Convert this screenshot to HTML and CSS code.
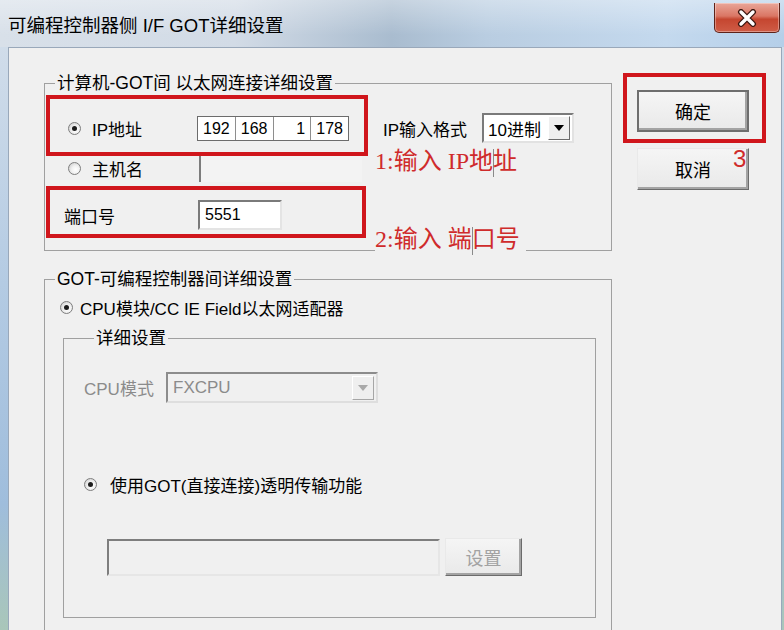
FILE: index.html
```html
<!DOCTYPE html>
<html lang="zh-CN">
<head>
    <meta charset="UTF-8">
    <title>可编程控制器侧 I/F GOT详细设置</title>
    <link rel="stylesheet" href="styles.css">
</head>
<body>
    <div class="window">
        <div class="titlebar">
            <span class="title">可编程控制器侧 I/F GOT详细设置</span>
            <div class="close">
                <svg width="22" height="18" viewBox="0 0 22 18">
                    <path d="M5 3 L17 15 M17 3 L5 15" stroke="#3b1610" stroke-width="6" stroke-linecap="round"/>
                    <path d="M5 3 L17 15 M17 3 L5 15" stroke="#fff" stroke-width="3.4" stroke-linecap="round"/>
                </svg>
            </div>
        </div>

        <div class="client">
            <div class="main">
                <!-- 计算机和GOT之间 -->
                <fieldset class="group group-eth">
                    <legend>计算机-GOT间 以太网连接详细设置</legend>
                    <div class="row row-opt">
                        <span class="radio on"></span>
                        <span class="row-label">IP地址</span>
                        <div class="ip-field">
                            <span>192</span><span>168</span><span>1</span><span>178</span>
                        </div>
                        <span class="fmt-label">IP输入格式</span>
                        <div class="combo combo-fmt">
                            <span class="combo-text">10进制</span>
                            <span class="combo-btn"></span>
                        </div>
                    </div>
                    <div class="row row-opt row-host">
                        <span class="radio"></span>
                        <span class="row-label">主机名</span>
                        <div class="host-field"></div>
                    </div>
                    <div class="row row-port">
                        <span class="port-label">端口号</span>
                        <div class="port-input">5551</div>
                    </div>
                </fieldset>

                <!-- GOT和PLC之间 -->
                <fieldset class="group group-plc">
                    <legend>GOT-可编程控制器间详细设置</legend>
                    <div class="row row-cpu">
                        <span class="radio on"></span>
                        <span>CPU模块/CC IE Field以太网适配器</span>
                    </div>
                    <fieldset class="group group-detail">
                        <legend>详细设置</legend>
                        <div class="row row-mode">
                            <span class="mode-label">CPU模式</span>
                            <div class="combo combo-off">
                                <span class="combo-text">FXCPU</span>
                                <span class="combo-btn"></span>
                            </div>
                        </div>
                        <div class="row row-trans">
                            <span class="radio on"></span>
                            <span>使用GOT(直接连接)透明传输功能</span>
                        </div>
                        <div class="row row-path">
                            <div class="path-field"></div>
                            <button class="btn btn-off">设置</button>
                        </div>
                    </fieldset>
                </fieldset>
            </div>

            <div class="side">
                <button class="btn btn-default">确定</button>
                <button class="btn">取消</button>
            </div>
        </div>

        <!-- 标注 -->
        <div class="mark mark-ip"></div>
        <div class="mark mark-port"></div>
        <div class="mark mark-ok"></div>
        <span class="note note-ip">1:输入 IP地<i class="caret"></i>址</span>
        <span class="note note-port">2:输入 端<i class="caret"></i>口号</span>
        <span class="note note-ok">3</span>
    </div>
</body>
</html>
```

FILE: styles.css
```css
body {
    margin: 0;
    font-family: "Liberation Sans", "Noto Sans CJK SC", sans-serif;
    font-size: 17px;
    color: #000;
}

.window {
    position: relative;
    width: 784px;
    height: 630px;
    overflow: hidden;
    background: linear-gradient(180deg, #d6e0eb 0%, #b4cbe3 45%, #9fbddc 80%, #a9c6b9 100%);
}

.titlebar {
    height: 47px;
    display: flex;
    justify-content: space-between;
    align-items: flex-start;
    background:
        linear-gradient(180deg, rgba(255, 255, 255, 0.35), rgba(255, 255, 255, 0) 75%),
        linear-gradient(90deg, #d8e0e9 0%, #d2dbe6 30%, #a9bccf 50%, #b9cde1 62%, #c4d9ee 85%, #b5cfe9 100%);
}

.title {
    margin: 16px 0 0 8px;
    font-size: 18.5px;
    line-height: 20px;
}

.close {
    width: 66px;
    height: 30px;
    margin: 3px 4px 0 0;
    box-sizing: border-box;
    display: flex;
    align-items: center;
    justify-content: center;
    border: 1px solid #5e2219;
    border-top: none;
    border-radius: 0 0 5px 5px;
    background: linear-gradient(180deg, #e9a699 0%, #da7664 45%, #c54630 56%, #cf5c46 100%);
    box-shadow: inset 0 0 0 1px rgba(255, 255, 255, 0.35);
}

.client {
    display: flex;
    gap: 25px;
    width: 774px;
    height: 583px;
    margin-left: 8px;
    box-sizing: border-box;
    padding: 25px 0 0 35px;
    background: #f0f0f0;
    border: 1px solid #99a8ba;
    border-bottom: none;
}

.main {
    width: 568px;
    flex: none;
}

/* group box */
.group {
    margin: 0;
    padding: 0;
    min-width: 0;
    border: 1px solid #a0a0a0;
}

.group legend {
    margin-left: 10px;
    padding: 0 2px;
    font-size: 17.5px;
    line-height: 20px;
}

.group-eth {
    padding: 19px 0;
}

.row {
    display: flex;
    align-items: center;
    height: 32px;
}

.row-opt {
    padding-left: 23px;
}

.row-host {
    margin-top: 8px;
}

.row-port {
    margin-top: 15px;
    padding-left: 19px;
}

.radio {
    position: relative;
    flex: none;
    width: 13px;
    height: 13px;
    margin-right: 11px;
    box-sizing: border-box;
    border: 1px solid #7e7e7e;
    border-radius: 50%;
    background: radial-gradient(circle at 60% 60%, #ffffff 0, #f2f2f2 40%, #c4c4c4 100%);
}

.radio.on::after {
    content: "";
    position: absolute;
    left: 3px;
    top: 3px;
    width: 5px;
    height: 5px;
    border-radius: 50%;
    background: #1c1c1c;
}

.row-label {
    width: 105px;
}

.ip-field {
    display: flex;
    width: 152px;
    height: 25px;
    box-sizing: border-box;
    border: 1px solid #6c6c6c;
    background: #fff;
}

.ip-field span {
    flex: 1;
    border-left: 1px solid #8e8e8e;
    padding-right: 5px;
    text-align: right;
    font-size: 16px;
    line-height: 23px;
}

.ip-field span:first-child {
    border-left: none;
}

.fmt-label {
    width: 99px;
    margin-left: 34px;
}

.combo {
    display: flex;
    align-items: center;
    box-sizing: border-box;
    border: 2px solid;
    border-color: #7a7a7a #e2e2e2 #e2e2e2 #7a7a7a;
    background: #fff;
}

.combo-fmt {
    width: 92px;
    height: 30px;
}

.combo-text {
    padding-left: 4px;
}

.combo-btn {
    display: flex;
    align-items: center;
    justify-content: center;
    width: 22px;
    height: 24px;
    margin-left: auto;
    margin-right: 2px;
    box-sizing: border-box;
    border: 1px solid;
    border-color: #fff #6b6b6b #6b6b6b #fff;
    background: #efefef;
}

.combo-btn::after {
    content: "";
    border-left: 5px solid transparent;
    border-right: 5px solid transparent;
    border-top: 6px solid #000;
}

.host-field {
    width: 161px;
    height: 28px;
    margin-left: 2px;
    border-left: 2px solid #7c7c7c;
    background: #f3f3f3;
}

.port-label {
    width: 134px;
}

.port-input {
    width: 84px;
    height: 30px;
    box-sizing: border-box;
    padding-left: 5px;
    border: 2px solid;
    border-color: #7a7a7a #e4e4e4 #e4e4e4 #7a7a7a;
    background: #fff;
    font-size: 16px;
    line-height: 26px;
}

.group-plc {
    margin-top: 18px;
    padding: 6px 0 20px 0;
}

.row-cpu {
    height: 24px;
    padding-left: 15px;
}

.row-cpu .radio {
    margin-right: 7px;
}

.group-detail {
    width: 533px;
    margin: 9px 0 0 18px;
    box-sizing: border-box;
    padding: 24px 0 41px 20px;
}

.row-mode {
    height: 31px;
}

.mode-label {
    width: 82px;
    color: #8b8b8b;
}

.combo-off {
    width: 212px;
    height: 31px;
    border-color: #8c8c8c #dedede #dedede #8c8c8c;
    background: #f0f0f0;
    color: #8b8b8b;
}

.combo-off .combo-text {
    padding-left: 5px;
}

.combo-off .combo-btn {
    border-color: #fff #a6a6a6 #a6a6a6 #fff;
}

.combo-off .combo-btn::after {
    border-top-color: #a9a9a9;
}

.row-trans {
    height: 24px;
    margin-top: 69px;
}

.row-trans .radio {
    margin-right: 13px;
}

.row-path {
    height: 38px;
    margin-top: 42px;
    margin-left: 23px;
    gap: 5px;
}

.path-field {
    width: 333px;
    height: 37px;
    box-sizing: border-box;
    border: 2px solid;
    border-color: #7e7e7e #e6e6e6 #e6e6e6 #7e7e7e;
    background: #f0f0f0;
}

/* buttons */
.side {
    display: flex;
    flex-direction: column;
    gap: 16px;
    padding-top: 17px;
}

.btn {
    width: 112px;
    height: 42px;
    padding: 0;
    font-family: inherit;
    font-size: 18px;
    color: #000;
    border: 1px solid;
    border-color: #e9e9e9 #6b6b6b #6b6b6b #e9e9e9;
    background: linear-gradient(180deg, #f5f5f5, #e9e9e9);
    box-shadow: inset -2px -2px 0 #a3a3a3;
}

.btn-default {
    border: 2px solid #6e6e6e;
}

.btn-off {
    width: 77px;
    height: 38px;
    color: #a2a2a2;
}

/* red annotations */
.mark {
    position: absolute;
    box-sizing: border-box;
    border: 4px solid #d0161c;
}

.mark-ip {
    left: 46px;
    top: 95px;
    width: 322px;
    height: 61px;
}

.mark-port {
    left: 46px;
    top: 186px;
    width: 320px;
    height: 52px;
}

.mark-ok {
    left: 623px;
    top: 73px;
    width: 143px;
    height: 70px;
}

.note {
    position: absolute;
    font-family: "Liberation Serif", "Noto Sans CJK SC", serif;
    font-size: 24px;
    line-height: 26px;
    color: #cf2b2b;
}

.caret {
    display: inline-block;
    width: 1px;
    height: 28px;
    margin: 0 -1px 0 0;
    vertical-align: middle;
    background: #8a8a8a;
}

.note-ip {
    left: 375px;
    top: 148px;
}

.note-port {
    left: 375px;
    top: 226px;
    padding-right: 6px;
    background: #f0f0f0;
}

.note-ok {
    left: 733px;
    top: 146px;
    font-family: "Liberation Sans", sans-serif;
}
```
